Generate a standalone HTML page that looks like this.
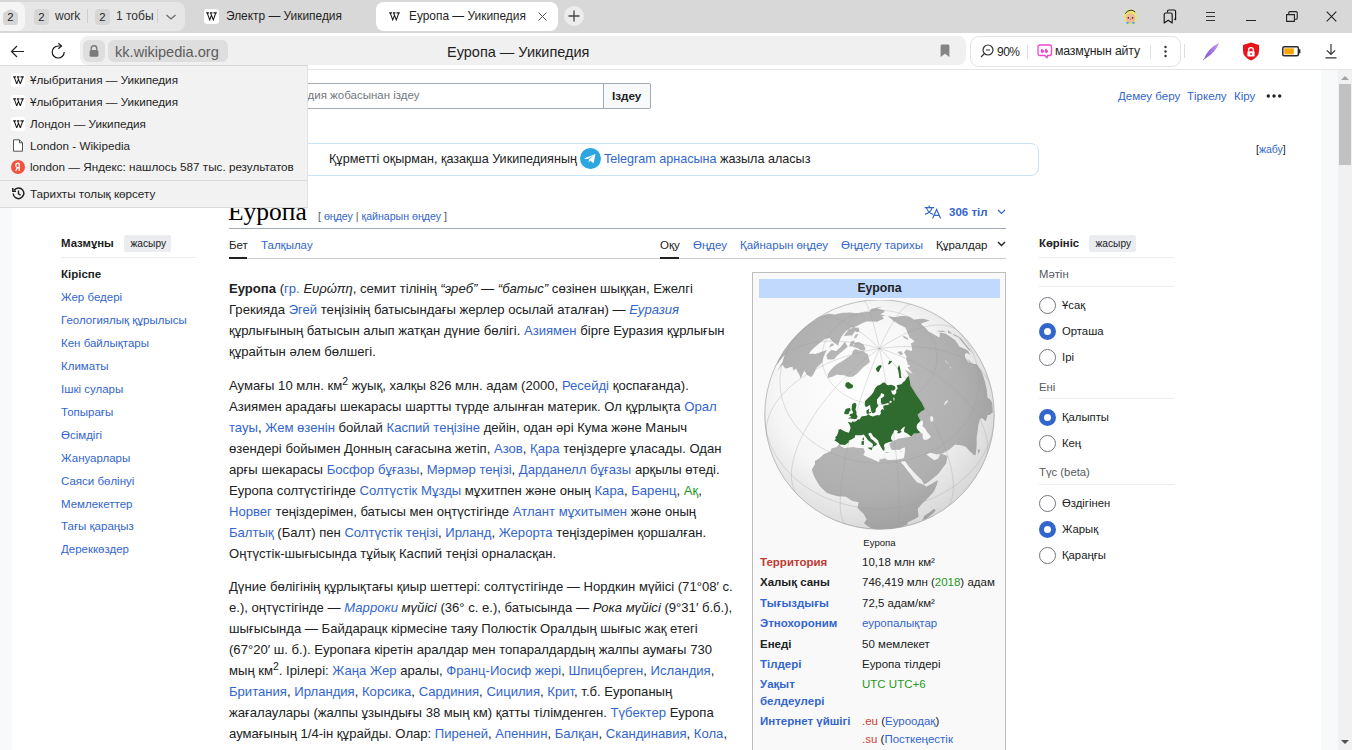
<!DOCTYPE html>
<html><head><meta charset="utf-8">
<style>
*{box-sizing:border-box;margin:0;padding:0}
html,body{width:1352px;height:750px;overflow:hidden;background:#fff;font-family:"Liberation Sans",sans-serif;color:#202122}
.abs{position:absolute}
#tabbar{position:absolute;left:0;top:0;width:1352px;height:33px;background:#d8d8d8}
#toolbar{position:absolute;left:0;top:33px;width:1352px;height:36px;background:#fff}
#page{position:absolute;left:0;top:70px;width:1352px;height:680px;background:#fff;overflow:hidden}
.chrome{line-height:15px}
a,.lk{color:#3366cc;text-decoration:none}
a.g,.g{color:#229922}
.t{position:absolute;white-space:nowrap;line-height:normal}
.badge{background:#d6d6d6;border-radius:4px;font-size:11.3px;color:#1f1f1f;text-align:center;line-height:16px}
.wlogo{background:#fff;border-radius:3px}
.ln{position:absolute;left:0;white-space:nowrap;line-height:21px}
sup{font-size:0.8em;line-height:0;vertical-align:super}
.radio{position:absolute;left:1039px;width:17px;height:17px;border-radius:50%;border:1px solid #72777d;background:#fff}
.radio.on{border:5px solid #3366cc}
.rl{left:1062px;font-size:11.3px;color:#202122}
.dd{left:30px;font-size:11.7px;color:#1f1f1f}
.ibl{position:absolute;left:0;white-space:nowrap;font-weight:bold}
.ibv{position:absolute;left:102px;white-space:nowrap;color:#202122}
.ibv.lk,.ibl.lk{color:#3366cc}
.ibv.g{color:#229922}
</style></head><body>
<div id="tabbar">
  <div class="abs" style="left:0;top:2px;width:185px;height:29px;background:#e6e6e6;border-radius:8px"></div>
  <div class="abs" style="left:0;top:2px;width:25px;height:29px;background:#f5f5f5;border-radius:0 8px 8px 0"></div>
  <svg class="abs" style="left:3px;top:8.5px" width="15" height="16.5" viewBox="0 0 15 16.5"><path d="M7.5 0.3 Q8.2 0.3 9 0.8 L13.6 3.2 Q15 4 15 5.6 V12.5 Q15 16.5 11 16.5 H4 Q0 16.5 0 12.5 V5.6 Q0 4 1.4 3.2 L6 0.8 Q6.8 0.3 7.5 0.3Z" fill="#d6d6d6"/></svg><div class="abs badge" style="left:3px;top:9px;width:15px;height:16px;background:none">2</div>
  <div class="abs badge" style="left:34px;top:9px;width:15px;height:16px">2</div>
  <div class="t chrome" style="left:55px;top:9px;font-size:12px;color:#333">work</div>
  <div class="abs" style="left:87px;top:9px;width:1px;height:14px;background:#cfcfcf"></div>
  <div class="abs badge" style="left:95px;top:9px;width:15px;height:16px">2</div>
  <div class="t chrome" style="left:116px;top:9px;font-size:12px;color:#333">1 тобы</div>
  <div class="abs" style="left:157px;top:9px;width:1px;height:14px;background:#cfcfcf"></div>
  <svg class="abs" style="left:165px;top:13px" width="12" height="8" viewBox="0 0 12 8"><path d="M1.5 2 L6 6 L10.5 2" fill="none" stroke="#666" stroke-width="1.2"/></svg>

  <div class="abs wlogo" style="left:204px;top:9px;width:15px;height:15px"><svg width="11" height="8.5" viewBox="0 0 13 10" style="position:absolute;left:2.0px;top:3.25px"><path d="M0.2 1 H3.6 M4.6 1 H7.6 M8.8 1 H12.8 M1.4 1 L4.4 9.3 L6.5 3.6 M5.4 1 L8.6 9.3 L11.6 1" fill="none" stroke="#1a1a1a" stroke-width="1.25"/></svg></div>
  <div class="t chrome" style="left:226px;top:9px;font-size:11.9px;color:#1f1f1f">Электр — Уикипедия</div>

  <div class="abs" style="left:376px;top:2px;width:182px;height:29px;background:#fff;border-radius:8px"></div>
  <div class="abs wlogo" style="left:387px;top:9px;width:15px;height:15px"><svg width="11" height="8.5" viewBox="0 0 13 10" style="position:absolute;left:2.0px;top:3.25px"><path d="M0.2 1 H3.6 M4.6 1 H7.6 M8.8 1 H12.8 M1.4 1 L4.4 9.3 L6.5 3.6 M5.4 1 L8.6 9.3 L11.6 1" fill="none" stroke="#1a1a1a" stroke-width="1.25"/></svg></div>
  <div class="t chrome" style="left:409px;top:9px;font-size:11.9px;color:#1f1f1f">Еуропа — Уикипедия</div>
  <svg class="abs" style="left:537px;top:11px" width="11" height="11" viewBox="0 0 11 11"><path d="M1.5 1.5 L9.5 9.5 M9.5 1.5 L1.5 9.5" stroke="#555" stroke-width="1"/></svg>
  <div class="abs" style="left:564px;top:6px;width:20px;height:20px;border-radius:50%;background:#ececec"></div>
  <svg class="abs" style="left:567px;top:9px" width="14" height="14" viewBox="0 0 14 14"><path d="M7 1.5 V12.5 M1.5 7 H12.5" stroke="#444" stroke-width="1.3"/></svg>

  <!-- right icons -->
  <svg class="abs" style="left:1123px;top:8.5px" width="15" height="16" viewBox="0 0 15 16">
    <ellipse cx="7.5" cy="8" rx="6.6" ry="7.4" fill="#e9e46a"/>
    <ellipse cx="7.5" cy="9" rx="4.6" ry="5" fill="#efb9a0"/>
    <path d="M3 5.5 Q5 4.2 7.5 4.5 Q10 4.2 12 5.5 Q11.5 3 7.5 3 Q3.5 3 3 5.5Z" fill="#e9e46a"/>
    <path d="M2.2 4.8 Q4 1.2 8 1.2 Q10.6 1.4 12.2 3" fill="none" stroke="#222" stroke-width="0.9"/>
    <circle cx="5.4" cy="8.8" r="0.85" fill="#3a3030"/><circle cx="9.6" cy="8.8" r="0.85" fill="#3a3030"/>
    <circle cx="7.5" cy="10.4" r="0.6" fill="#f0508a"/>
    <circle cx="4.3" cy="10" r="0.8" fill="#f4a0b0"/><circle cx="10.7" cy="10" r="0.8" fill="#f4a0b0"/>
    <path d="M3.6 12.6 L6.6 13.8 L3.6 15.2Z M11.4 12.6 L8.4 13.8 L11.4 15.2Z" fill="#3aa0f0"/>
  </svg>
  <svg class="abs" style="left:1163px;top:9px" width="14" height="15" viewBox="0 0 14 15"><path d="M4.5 3.2 V2.6 Q4.5 1 6 1 H11 Q12.6 1 12.6 2.6 V10.6 L11.2 10 M1.2 5.5 Q1.2 4 2.7 4 H7.6 Q9.2 4 9.2 5.5 V14 L5.2 11.2 L1.2 14Z" fill="none" stroke="#151515" stroke-width="1.15" stroke-linejoin="round"/></svg>
  <svg class="abs" style="left:1205px;top:11px" width="11" height="11" viewBox="0 0 11 11"><path d="M1 1.5 H10 M1 5.5 H10 M1 9.5 H10" stroke="#333" stroke-width="1.2"/></svg>
  <div class="abs" style="left:1246px;top:20px;width:10px;height:1.2px;background:#222"></div>
  <svg class="abs" style="left:1286px;top:11px" width="12" height="11" viewBox="0 0 12 11"><path d="M0.6 3.6 H8.4 V10.4 H0.6Z M2.8 3.6 V1.6 Q2.8 0.6 3.8 0.6 H10.2 Q11.2 0.6 11.2 1.6 V7.2 Q11.2 8.2 10.2 8.2 H8.4" fill="none" stroke="#222" stroke-width="1.1"/></svg>
  <svg class="abs" style="left:1326px;top:11px" width="11" height="11" viewBox="0 0 11 11"><path d="M0.7 0.7 L10.3 10.3 M10.3 0.7 L0.7 10.3" stroke="#222" stroke-width="1.1"/></svg>
</div>

<div id="toolbar">
  <svg class="abs" style="left:10px;top:12px" width="15" height="13" viewBox="0 0 15 13"><path d="M1.5 6.5 H14 M7 1 L1.5 6.5 L7 12" fill="none" stroke="#222" stroke-width="1.2"/></svg>
  <svg class="abs" style="left:51px;top:9px" width="15" height="17" viewBox="0 0 15 17"><path d="M13.2 10 A6 6 0 1 1 7.2 4 H10.4" fill="none" stroke="#1a1a1a" stroke-width="1.2"/><path d="M7.4 1.3 L10.5 4 L7.4 6.7" fill="none" stroke="#1a1a1a" stroke-width="1.2"/></svg>
  <div class="abs" style="left:80px;top:3px;width:886px;height:29px;background:#f0f0f0;border-radius:8px"></div>
  <div class="abs" style="left:83px;top:7px;width:22px;height:22px;background:#dedede;border-radius:6px"></div>
  <svg class="abs" style="left:89px;top:11px" width="10" height="14" viewBox="0 0 10 14"><path d="M2.2 6.5 V4.5 A2.8 2.8 0 0 1 7.8 4.5 V6.5" fill="none" stroke="#7a7a7a" stroke-width="1.4"/><rect x="0.6" y="6" width="8.8" height="6.8" rx="1.5" fill="#7a7a7a"/></svg>
  <div class="abs" style="left:108px;top:7px;width:120px;height:22px;background:#dedede;border-radius:6px"></div>
  <div class="t" style="left:115px;top:11px;font-size:14.6px;color:#5c5c5c">kk.wikipedia.org</div>
  <div class="t" style="left:447px;top:11px;font-size:14.5px;color:#1f1f1f">Еуропа — Уикипедия</div>
  <svg class="abs" style="left:939.5px;top:11px" width="10" height="14" viewBox="0 0 10 14"><path d="M0.6 2 Q0.6 0.6 2 0.6 H8 Q9.4 0.6 9.4 2 V13 L5 9.8 L0.6 13Z" fill="#858585"/></svg>

  <div class="abs" style="left:970px;top:3px;width:211px;height:31px;background:#fff;border:1px solid #e3e3e3;border-radius:9px"></div>
  <svg class="abs" style="left:980px;top:11px" width="14" height="14" viewBox="0 0 14 14"><circle cx="8" cy="6" r="5" fill="none" stroke="#333" stroke-width="1.2"/><path d="M4.5 9.5 L1 13 M6 6 H10" stroke="#333" stroke-width="1.2"/></svg>
  <div class="t chrome" style="left:997px;top:12px;font-size:12px;letter-spacing:-0.5px;color:#1f1f1f">90%</div>
  <div class="abs" style="left:1027px;top:12px;width:1px;height:14px;background:#e0e0e0"></div>
  <svg class="abs" style="left:1037px;top:11px" width="16" height="16" viewBox="0 0 16 16"><path d="M3 1 H12.5 Q14.5 1 14.5 3 V9.5 Q14.5 11.5 12.5 11.5 H10.5 L10 13.8 L8 11.5 H3 Q1 11.5 1 9.5 V3 Q1 1 3 1Z" fill="none" stroke="#ee46c8" stroke-width="1.3" stroke-linejoin="round"/><path d="M5.3 5 Q4.2 5.6 4.4 7.3 A1 1 0 1 0 5.6 6.3 M9.3 5 Q8.2 5.6 8.4 7.3 A1 1 0 1 0 9.6 6.3" stroke="#ee46c8" stroke-width="1.2" fill="#ee46c8"/></svg>
  <div class="t chrome" style="left:1055px;top:11px;font-size:12.3px;letter-spacing:-0.15px;color:#1f1f1f">мазмұнын айту</div>
  <div class="abs" style="left:1150px;top:12px;width:1px;height:14px;background:#e0e0e0"></div>
  <svg class="abs" style="left:1163px;top:12px" width="5" height="13" viewBox="0 0 5 13"><circle cx="2.5" cy="2" r="1.2" fill="#333"/><circle cx="2.5" cy="6.5" r="1.2" fill="#333"/><circle cx="2.5" cy="11" r="1.2" fill="#333"/></svg>
  <div class="abs" style="left:1184px;top:11px;width:1px;height:14px;background:#dedede"></div>
  <svg class="abs" style="left:1202px;top:9px" width="19" height="19" viewBox="0 0 19 19"><defs><linearGradient id="fg" x1="0" y1="1" x2="1" y2="0"><stop offset="0" stop-color="#7a4fd6"/><stop offset="1" stop-color="#c89cf2"/></linearGradient></defs><path d="M2 17 Q6 6 17 1 Q14 10 4 16Z" fill="url(#fg)"/><path d="M1 18 Q3 16 6 14" stroke="#9b7ae0" stroke-width="1"/></svg>
  <svg class="abs" style="left:1242px;top:9px" width="18" height="19" viewBox="0 0 18 19"><path d="M9 0.5 L17 3 V9 Q17 15 9 18.5 Q1 15 1 9 V3Z" fill="#e8141b"/><path d="M6.6 9.5 V8 A2.4 2.4 0 0 1 11.4 8 V9.5" fill="none" stroke="#fff" stroke-width="1.3"/><rect x="5.4" y="9.3" width="7.2" height="5.2" rx="0.8" fill="#fff"/><circle cx="9" cy="11.9" r="0.9" fill="#e8141b"/></svg>
  <svg class="abs" style="left:1282px;top:13px" width="19" height="11" viewBox="0 0 19 11"><rect x="0.8" y="0.8" width="15.6" height="9" rx="1.5" fill="none" stroke="#2a2a2a" stroke-width="1.5"/><rect x="2.3" y="2.3" width="9.5" height="6" fill="#f7a400"/><rect x="16.6" y="3.3" width="1.8" height="4" fill="#2a2a2a"/></svg>
  <svg class="abs" style="left:1325px;top:10px" width="12" height="16" viewBox="0 0 12 16"><path d="M6 1 V11.5 M1.8 7.3 L6 11.5 L10.2 7.3 M0.5 14.8 H11.5" fill="none" stroke="#333" stroke-width="1.2"/></svg>
</div>
<div id="page">
  <div class="abs" style="left:0;top:0;width:12px;height:680px;background:#f8f9fa"></div>
  <div class="abs" style="left:1321px;top:0;width:17px;height:680px;background:#f8f9fa"></div>
  <div class="abs" style="left:1338px;top:0;width:14px;height:680px;background:#f1f1f1"></div>
  <svg class="abs" style="left:1340px;top:5px" width="10" height="6" viewBox="0 0 10 6"><path d="M1 5 L5 1 L9 5Z" fill="#a3a3a3"/></svg>
  <div class="abs" style="left:1339px;top:14px;width:12px;height:81px;background:#c1c1c1"></div>
  <svg class="abs" style="left:1340px;top:669px" width="10" height="6" viewBox="0 0 10 6"><path d="M1 1 L5 5 L9 1Z" fill="#505050"/></svg>
</div>
<div class="abs" style="left:0;top:69px;width:1352px;height:1px;background:#e6e6e6"></div>

<!-- search -->
<div class="abs" style="left:180px;top:83px;width:424px;height:26px;border:1px solid #a2a9b1;border-radius:2px 0 0 2px;background:#fff"></div>
<div class="t" style="left:186px;top:89px;font-size:11.5px;color:#72777d;width:233.5px;text-align:right">Уикипедия жобасынан іздеу</div>
<div class="abs" style="left:603px;top:83px;width:48px;height:26px;border:1px solid #a2a9b1;border-radius:0 2px 2px 0;background:#f8f9fa"></div>
<div class="t" style="left:612px;top:89px;font-size:11.7px;font-weight:bold;color:#202122">Іздеу</div>

<div class="t lk" style="left:1118px;top:90px;font-size:11.5px">Демеу беру</div>
<div class="t lk" style="left:1187px;top:90px;font-size:11.5px">Тіркелу</div>
<div class="t lk" style="left:1234px;top:90px;font-size:11.5px">Кіру</div>
<svg class="abs" style="left:1266px;top:93px" width="16" height="6" viewBox="0 0 16 6"><circle cx="2.3" cy="3" r="1.7" fill="#202122"/><circle cx="8" cy="3" r="1.7" fill="#202122"/><circle cx="13.7" cy="3" r="1.7" fill="#202122"/></svg>

<!-- banner -->
<div class="abs" style="left:101px;top:143px;width:938px;height:33px;border:1px solid #c9e3f3;border-radius:8px;background:#fff"></div>
<div class="t" style="left:329px;top:152px;font-size:12.6px;color:#202122">Құрметті оқырман, қазақша Уикипедияның</div>
<svg class="abs" style="left:580px;top:148px" width="21" height="21" viewBox="0 0 21 21"><circle cx="10.5" cy="10.5" r="10.5" fill="#2ca5e0"/><path d="M4.5 10.2 L15.5 6 L13.6 15.2 L10.3 12.8 L8.6 14.4 L8.9 11.6 L13.7 7.3 L7.8 10.9 L4.8 10.9Z" fill="#fff"/></svg>
<div class="t lk" style="left:604px;top:152px;font-size:12.6px">Telegram арнасына</div>
<div class="t" style="left:720px;top:152px;font-size:12.6px;color:#202122">жазыла аласыз</div>
<div class="t" style="left:1256px;top:143px;font-size:10.5px;color:#202122">[<span class="lk">жабу</span>]</div>

<!-- heading -->
<div class="t" style="left:228px;top:197px;font-family:'Liberation Serif',serif;font-size:25.5px;color:#000">Еуропа</div>
<div class="t" style="left:318px;top:210px;font-size:10.6px;color:#54595d">[ <span class="lk">өңдеу</span> | <span class="lk">қайнарын өңдеу</span> ]</div>
<svg class="abs" style="left:924px;top:205px" width="18" height="14" viewBox="0 0 18 14"><path d="M5.2 0.6 V2.4 M0.6 2.6 H10.2 M2.4 2.6 Q4 7.6 9.2 9.4 M8.2 2.6 Q6.8 7.6 1 9.4 M8.6 13.4 L12.6 4.4 L16.6 13.4 M10 10.4 H15.2" fill="none" stroke="#3366cc" stroke-width="1.2"/></svg>
<div class="t" style="left:949px;top:206px;font-size:11.5px;font-weight:bold;color:#3366cc">306 тіл</div>
<svg class="abs" style="left:997px;top:209px" width="9" height="6" viewBox="0 0 9 6"><path d="M1 1 L4.5 4.5 L8 1" fill="none" stroke="#3366cc" stroke-width="1.2"/></svg>
<div class="abs" style="left:229px;top:228px;width:777px;height:1px;background:#a2a9b1"></div>

<!-- tabs -->
<div class="t" style="left:229px;top:239px;font-size:11.5px;color:#202122">Бет</div>
<div class="t lk" style="left:261px;top:239px;font-size:11.5px">Талқылау</div>
<div class="t" style="left:660px;top:239px;font-size:11.5px;color:#202122">Оқу</div>
<div class="t lk" style="left:693px;top:239px;font-size:11.5px">Өңдеу</div>
<div class="t lk" style="left:740px;top:239px;font-size:11.5px">Қайнарын өңдеу</div>
<div class="t lk" style="left:841px;top:239px;font-size:11.5px">Өңделу тарихы</div>
<div class="t" style="left:936px;top:239px;font-size:11.5px;color:#202122">Құралдар</div>
<svg class="abs" style="left:997px;top:241px" width="9" height="6" viewBox="0 0 9 6"><path d="M1 1 L4.5 4.5 L8 1" fill="none" stroke="#202122" stroke-width="1.4"/></svg>
<div class="abs" style="left:229px;top:258px;width:777px;height:1px;background:#c8ccd1"></div>
<div class="abs" style="left:229px;top:257px;width:18px;height:2px;background:#202122"></div>
<div class="abs" style="left:660px;top:257px;width:19px;height:2px;background:#202122"></div>

<!-- TOC -->
<div class="t" style="left:61px;top:237px;font-size:11.4px;font-weight:bold;color:#202122">Мазмұны</div>
<div class="abs" style="left:124px;top:235px;width:47px;height:17px;background:#eaecf0;border-radius:2px"></div>
<div class="t" style="left:130.5px;top:238px;font-size:10.2px;color:#202122">жасыру</div>
<div class="abs" style="left:61px;top:257px;width:135px;height:1px;background:#eaecf0"></div>
<div id="toc" class="abs" style="left:61px;top:263px;font-size:11.5px;line-height:22.95px">
  <div style="font-weight:bold;color:#202122">Кіріспе</div>
  <div class="lk">Жер бедері</div>
  <div class="lk">Геологиялық құрылысы</div>
  <div class="lk">Кен байлықтары</div>
  <div class="lk">Климаты</div>
  <div class="lk">Ішкі сулары</div>
  <div class="lk">Топырағы</div>
  <div class="lk">Өсімдігі</div>
  <div class="lk">Жануарлары</div>
  <div class="lk">Саяси бөлінуі</div>
  <div class="lk">Мемлекеттер</div>
  <div class="lk">Тағы қараңыз</div>
  <div class="lk">Дереккөздер</div>
</div>

<!-- right panel -->
<div class="t" style="left:1039px;top:237px;font-size:11.3px;font-weight:bold;color:#202122">Көрініс</div>
<div class="abs" style="left:1089px;top:235px;width:47px;height:17px;background:#eaecf0;border-radius:2px"></div>
<div class="t" style="left:1095.5px;top:238px;font-size:10.2px;color:#202122">жасыру</div>
<div class="abs" style="left:1039px;top:257px;width:135px;height:1px;background:#eaecf0"></div>
<div class="t" style="left:1039px;top:268px;font-size:11.3px;color:#54595d">Мәтін</div>
<div class="abs" style="left:1039px;top:286px;width:135px;height:1px;background:#eaecf0"></div>
<div class="radio" style="top:297px"></div><div class="t rl" style="top:299px">Ұсақ</div>
<div class="radio on" style="top:323px"></div><div class="t rl" style="top:325px">Орташа</div>
<div class="radio" style="top:349px"></div><div class="t rl" style="top:351px">Ірі</div>
<div class="t" style="left:1039px;top:381px;font-size:11.3px;color:#54595d">Ені</div>
<div class="abs" style="left:1039px;top:398px;width:135px;height:1px;background:#eaecf0"></div>
<div class="radio on" style="top:409px"></div><div class="t rl" style="top:411px">Қалыпты</div>
<div class="radio" style="top:435px"></div><div class="t rl" style="top:437px">Кең</div>
<div class="t" style="left:1039px;top:466px;font-size:11.3px;color:#54595d">Түс (beta)</div>
<div class="abs" style="left:1039px;top:484px;width:135px;height:1px;background:#eaecf0"></div>
<div class="radio" style="top:494.5px"></div><div class="t rl" style="top:497px">Өздігінен</div>
<div class="radio on" style="top:520.5px"></div><div class="t rl" style="top:523px">Жарық</div>
<div class="radio" style="top:546.5px"></div><div class="t rl" style="top:549px">Қараңғы</div>
<!-- article -->
<div id="art" class="abs" style="left:229px;top:0;font-size:13.1px;color:#202122">
<div class="ln" style="top:278px"><b>Еуропа</b> (<a>гр.</a> <i>Ευρώπη</i>, семит тілінің <i>“эреб”</i> — <i>“батыс”</i> сөзінен шыққан, Ежелгі</div>
<div class="ln" style="top:299px">Грекияда <a>Эгей</a> теңізінің батысындағы жерлер осылай аталған) — <a><i>Еуразия</i></a></div>
<div class="ln" style="top:320px">құрлығының батысын алып жатқан дүние бөлігі. <a>Азиямен</a> бірге Еуразия құрлығын</div>
<div class="ln" style="top:341px">құрайтын әлем бөлшегі.</div>

<div class="ln" style="top:375px">Аумағы 10 млн. км<sup>2</sup> жуық, халқы 826 млн. адам (2000, <a>Ресейді</a> қоспағанда).</div>
<div class="ln" style="top:396px">Азиямен арадағы шекарасы шартты түрде алынған материк. Ол құрлықта <a>Орал</a></div>
<div class="ln" style="top:417px"><a>тауы</a>, <a>Жем өзенін</a> бойлай <a>Каспий теңізіне</a> дейін, одан әрі Кума және Маныч</div>
<div class="ln" style="top:438px">өзендері бойымен Донның сағасына жетіп, <a>Азов</a>, <a>Қара</a> теңіздерге ұласады. Одан</div>
<div class="ln" style="top:459px">арғы шекарасы <a>Босфор бұғазы</a>, <a>Мәрмәр теңізі</a>, <a>Дарданелл бұғазы</a> арқылы өтеді.</div>
<div class="ln" style="top:480px">Еуропа солтүстігінде <a>Солтүстік Мұзды</a> мұхитпен және оның <a>Кара</a>, <a>Баренц</a>, <a class="g">Ақ</a>,</div>
<div class="ln" style="top:501px"><a>Норвег</a> теңіздерімен, батысы мен оңтүстігінде <a>Атлант мұхитымен</a> және оның</div>
<div class="ln" style="top:522px"><a>Балтық</a> (Балт) пен <a>Солтүстік теңізі</a>, <a>Ирланд</a>, <a>Жерорта</a> теңіздерімен қоршалған.</div>
<div class="ln" style="top:543px">Оңтүстік-шығысында тұйық Каспий теңізі орналасқан.</div>

<div class="ln" style="top:576px">Дүние бөлігінің құрлықтағы қиыр шеттері: солтүстігінде — Нордкин мүйісі (71°08′ с.</div>
<div class="ln" style="top:597px">е.), оңтүстігінде — <a><i>Марроки</i></a> <i>мүйісі</i> (36° с. е.), батысында — <i>Рока мүйісі</i> (9°31′ б.б.),</div>
<div class="ln" style="top:618px">шығысында — Байдарацк кірмесіне таяу Полюстік Оралдың шығыс жақ етегі</div>
<div class="ln" style="top:639px">(67°20′ ш. б.). Еуропаға кіретін аралдар мен топаралдардың жалпы аумағы 730</div>
<div class="ln" style="top:660px">мың км<sup>2</sup>. Ірілері: <a>Жаңа Жер</a> аралы, <a>Франц-Иосиф жері</a>, <a>Шпицберген</a>, <a>Исландия</a>,</div>
<div class="ln" style="top:681px"><a>Британия</a>, <a>Ирландия</a>, <a>Корсика</a>, <a>Сардиния</a>, <a>Сицилия</a>, <a>Крит</a>, т.б. Еуропаның</div>
<div class="ln" style="top:702px">жағалаулары (жалпы ұзындығы 38 мың км) қатты тілімденген. <a>Түбектер</a> Еуропа</div>
<div class="ln" style="top:723px">аумағының 1/4-ін құрайды. Олар: <a>Пиреней</a>, <a>Апеннин</a>, <a>Балқан</a>, <a>Скандинавия</a>, <a>Кола</a>,</div>
</div>

<!-- infobox -->
<div class="abs" style="left:752px;top:272px;width:254px;height:500px;background:#f9f9f9;border:1px solid #bdbdbd"></div>
<div class="abs" style="left:759px;top:279px;width:241px;height:19px;background:#c0d9fc"></div>
<div class="t" style="left:759px;top:280.5px;width:241px;text-align:center;font-size:12.3px;font-weight:bold;color:#202122">Еуропа</div>
<div class="abs" id="globe" style="left:764px;top:300px;width:231px;height:231px"><svg width="231" height="231" viewBox="0 0 231 231"><defs>
<radialGradient id="gsea" cx="0.42" cy="0.4" r="0.62"><stop offset="0" stop-color="#ffffff"/><stop offset="0.6" stop-color="#f6f6f6"/><stop offset="1" stop-color="#d9d9d9"/></radialGradient>
<radialGradient id="gland" cx="0.42" cy="0.4" r="0.62"><stop offset="0" stop-color="#bcbcbc"/><stop offset="0.7" stop-color="#b0b0b0"/><stop offset="1" stop-color="#a0a0a0"/></radialGradient>
<clipPath id="gclip"><circle cx="115.5" cy="114.5" r="115.0"/></clipPath></defs>
<circle cx="115.5" cy="114.5" r="115.0" fill="url(#gsea)"/>
<g clip-path="url(#gclip)">
<path d="M147.1 136.4 L144.4 137.0 L141.8 137.6 L139.1 138.0 L136.9 138.3 L134.7 138.6 L131.9 139.9 L129.0 141.1 L125.2 143.8 L126.2 146.6 L127.2 149.4 L129.1 150.0 L132.3 149.7 L135.6 149.9 L138.6 148.0 L140.9 147.5 L141.0 150.0 L140.5 154.9 L139.8 158.2 L136.5 159.1 L137.1 161.2 L141.2 161.3 L143.0 164.0 L144.9 166.8 L147.5 169.6 L150.2 172.4 L152.1 174.4 L154.0 176.3 L155.9 178.2 L157.8 180.0 L158.9 182.2 L159.9 184.4 L162.9 183.1 L165.8 180.9 L168.7 178.6 L171.5 176.3 L174.2 173.9 L176.4 171.1 L178.4 168.3 L182.1 163.4 L182.9 159.8 L183.5 156.1 L180.0 154.8 L176.5 153.3 L174.2 158.7 L170.2 160.2 L167.0 158.1 L164.7 156.3 L162.5 154.4 L166.3 152.7 L169.6 153.6 L172.9 154.5 L175.4 154.1 L177.9 153.7 L180.3 152.4 L182.8 151.1 L185.1 149.8 L187.2 148.1 L189.2 146.3 L191.1 144.6 L194.0 144.9 L196.9 145.2 L199.5 146.1 L202.1 146.9 L203.8 148.9 L205.4 150.9 L206.9 152.2 L208.3 153.5 L209.6 154.7 L211.5 155.3 L212.0 152.0 L212.4 148.7 L212.7 145.3 L212.7 141.4 L212.6 137.5 L213.3 133.4 L213.9 129.3 L214.3 125.2 L215.1 122.4 L215.7 119.7 L217.6 118.0 L219.1 119.1 L220.5 120.2 L221.8 121.3 L222.8 118.2 L223.6 115.1 L225.6 115.0 L226.8 114.0 L227.8 113.0 L228.8 112.8 L228.6 107.8 L228.2 103.0 L227.5 101.8 L226.8 100.6 L226.0 99.5 L224.7 98.4 L223.4 97.3 L223.2 94.1 L222.9 90.9 L222.3 87.4 L221.5 83.9 L220.6 80.6 L219.6 77.3 L218.5 74.1 L217.3 70.9 L215.7 68.6 L214.1 66.3 L212.4 64.1 L211.0 64.1 L209.4 64.1 L207.8 63.2 L206.1 62.4 L204.7 58.8 L204.7 61.0 L204.6 63.2 L203.0 60.2 L201.2 57.4 L201.0 55.7 L200.8 54.0 L203.0 53.1 L204.7 54.1 L206.4 55.1 L205.1 52.8 L203.8 50.6 L201.8 49.5 L199.7 48.6 L197.6 47.6 L195.4 46.8 L194.1 44.5 L192.6 42.3 L191.1 40.2 L187.8 37.7 L184.5 35.5 L181.2 33.4 L178.4 33.0 L175.5 32.6 L175.7 34.3 L175.7 36.0 L175.3 37.6 L173.1 36.2 L171.0 34.9 L168.8 33.7 L166.6 32.6 L164.5 31.6 L163.6 30.6 L162.7 29.6 L161.8 28.6 L160.9 27.6 L159.9 26.6 L158.9 25.7 L157.8 24.8 L156.8 23.9 L158.7 23.1 L160.5 22.3 L162.3 21.7 L164.1 21.1 L165.8 20.6 L162.3 19.6 L158.9 18.7 L156.7 18.8 L154.5 19.0 L152.3 19.3 L150.1 19.8 L148.7 18.9 L147.2 18.1 L145.8 17.3 L144.2 16.6 L142.2 16.3 L140.2 16.1 L138.2 16.0 L136.2 16.0 L134.1 16.6 L132.1 17.3 L130.7 17.1 L129.3 16.9 L127.8 16.7 L126.4 16.6 L125.0 16.6 L123.6 16.5 L124.8 17.2 L125.9 18.0 L126.9 18.7 L127.9 19.5 L128.8 20.4 L129.6 21.2 L130.6 21.7 L131.6 22.3 L132.5 22.8 L133.4 23.4 L134.3 24.0 L135.2 24.6 L136.2 25.0 L137.2 25.5 L138.2 26.0 L139.2 26.5 L140.2 27.0 L141.1 27.6 L141.6 28.4 L142.1 29.3 L142.5 30.2 L142.9 31.0 L143.2 31.9 L143.5 32.7 L143.9 33.5 L144.3 34.3 L144.6 35.1 L144.9 35.9 L145.2 36.6 L145.4 37.4 L146.4 38.0 L147.3 38.7 L148.1 39.4 L149.0 40.1 L149.9 40.9 L150.7 41.6 L148.7 42.6 L146.7 43.4 L147.0 44.1 L147.2 44.8 L147.4 45.5 L147.6 46.3 L147.7 47.0 L147.9 47.7 L148.0 48.4 L148.1 49.1 L148.1 49.9 L147.7 50.5 L147.2 51.1 L142.3 49.6 L141.9 50.1 L141.4 50.7 L140.9 51.2 L140.4 51.7 L139.9 52.2 L140.3 52.8 L140.8 53.5 L141.2 54.2 L141.6 54.9 L142.0 55.6 L142.4 56.4 L142.4 57.2 L142.3 57.9 L142.3 58.7 L142.2 59.5 L142.6 60.5 L143.0 61.5 L143.3 62.5 L143.6 63.6 L143.8 64.6 L146.4 66.1 L145.4 66.6 L144.4 67.0 L143.4 67.5 L146.2 70.7 L148.9 74.1 L146.2 72.6 L143.5 71.1 L140.9 69.5 L142.8 72.5 L144.5 75.6 L145.4 78.7 L145.9 80.9 L146.2 83.2 L146.4 85.4 L148.2 88.3 L150.0 91.1 L151.7 94.0 L153.6 96.7 L155.6 99.4 L157.5 102.2 L159.3 105.7 L161.0 109.3 L159.1 110.6 L157.0 111.8 L155.3 113.3 L153.6 114.7 L155.1 117.9 L156.5 121.0 L158.6 120.4 L159.2 124.0 L158.1 125.7 L161.1 128.5 L163.5 132.6 L166.2 135.4 L166.7 137.2 L163.0 139.8 L159.7 139.7 L158.7 137.5 L158.6 134.0 L156.4 132.3 L153.8 133.4 L150.0 133.4Z M74.8 144.6 L77.5 146.4 L80.3 148.0 L83.0 147.8 L85.8 147.5 L88.6 147.1 L91.3 147.5 L94.1 147.9 L96.8 148.1 L99.6 148.3 L100.9 151.9 L99.2 154.9 L101.8 156.2 L104.4 157.4 L107.0 158.6 L109.7 159.8 L112.4 161.1 L115.2 162.2 L115.5 159.4 L118.0 158.9 L120.6 158.2 L124.0 159.9 L126.8 159.9 L129.6 159.8 L132.4 159.7 L136.5 159.1 L137.1 161.2 L137.3 163.0 L139.8 165.2 L141.7 167.9 L143.6 170.6 L145.4 172.8 L147.2 174.9 L148.7 177.0 L150.2 179.1 L152.9 182.3 L156.3 183.6 L159.7 184.8 L162.4 186.8 L165.3 185.1 L168.2 183.5 L171.0 181.7 L173.8 179.9 L173.1 184.3 L171.9 187.0 L170.7 189.7 L169.3 192.2 L166.7 195.1 L164.1 197.8 L161.4 200.5 L158.6 203.0 L156.2 205.9 L153.7 208.7 L153.9 210.4 L154.1 212.0 L154.2 213.6 L154.3 214.7 L154.4 215.8 L154.4 216.8 L150.8 218.9 L147.1 220.8 L143.5 222.6 L143.5 223.5 L143.6 224.3 L141.5 225.2 L139.4 226.1 L137.4 226.8 L134.9 227.5 L132.5 228.1 L129.9 228.5 L127.2 228.9 L124.6 229.1 L121.6 229.3 L118.5 229.5 L115.5 229.5 L112.8 229.5 L111.6 229.3 L110.4 229.1 L109.1 228.8 L107.9 228.4 L106.5 227.9 L105.4 227.3 L104.3 226.6 L103.2 225.9 L102.1 225.0 L101.0 224.0 L99.8 223.0 L100.8 221.9 L101.7 220.7 L102.7 219.4 L101.9 218.1 L101.1 216.7 L100.4 215.2 L99.6 213.7 L97.6 211.9 L95.5 210.1 L93.6 208.1 L93.9 206.2 L94.2 204.3 L94.6 202.3 L91.2 201.5 L87.8 200.7 L84.9 198.8 L82.1 196.8 L78.9 196.6 L75.7 196.4 L72.6 196.0 L69.2 195.0 L65.8 193.9 L62.6 192.8 L59.2 189.5 L55.9 186.2 L53.2 182.0 L50.8 177.7 L49.2 173.9 L47.8 170.1 L48.8 168.0 L49.9 166.0 L51.0 163.9 L50.9 161.1 L53.1 159.7 L55.2 158.2 L57.6 156.2 L59.9 154.1 L63.1 152.8 L66.3 151.5 L67.7 148.2 L72.5 147.3Z M91.6 49.0 L92.6 49.4 L93.6 49.8 L94.6 50.2 L95.6 50.5 L96.6 50.8 L97.6 51.1 L98.7 51.3 L99.7 51.5 L100.0 51.7 L100.4 52.0 L100.7 52.3 L101.0 52.5 L101.3 52.8 L101.7 53.0 L102.0 53.2 L102.4 53.4 L102.8 53.6 L103.1 53.8 L103.5 54.0 L103.9 54.1 L104.2 54.3 L104.2 54.7 L104.2 55.0 L104.2 55.4 L104.2 55.8 L104.3 56.1 L104.3 56.5 L104.4 56.9 L104.5 57.3 L104.6 57.7 L104.7 58.1 L104.9 58.4 L105.0 58.8 L105.2 59.2 L105.3 59.7 L105.4 60.3 L105.6 60.8 L105.8 61.3 L106.0 61.8 L104.5 63.2 L102.9 64.5 L101.3 65.7 L99.6 66.9 L97.3 69.3 L95.0 71.7 L92.7 74.1 L89.2 76.5 L87.2 76.8 L85.2 77.1 L84.0 76.7 L82.7 76.3 L81.5 75.8 L80.4 75.3 L78.6 75.2 L76.9 75.1 L75.1 74.9 L73.4 74.6 L70.6 75.8 L67.8 77.0 L63.8 78.0 L63.8 76.0 L63.8 73.9 L65.8 71.2 L67.8 68.7 L70.1 66.5 L72.5 64.5 L75.1 62.9 L77.7 61.4 L80.3 59.7 L82.9 58.1 L85.4 56.2 L88.1 54.5 L88.2 53.8 L88.3 53.1 L88.4 52.4 L88.5 51.8 L88.7 51.1 L89.6 50.4 L90.6 49.6Z M12.9 71.8 L14.6 69.4 L16.4 67.1 L18.4 64.8 L19.4 66.1 L20.5 67.4 L21.8 68.6 L23.9 67.9 L26.0 67.3 L28.3 66.7 L28.9 68.7 L29.6 70.6 L32.1 68.5 L32.7 69.9 L33.4 71.3 L34.1 72.7 L35.3 74.4 L36.0 76.4 L36.8 78.4 L37.9 75.8 L39.1 73.2 L40.4 70.6 L41.1 71.9 L41.9 73.2 L42.7 74.5 L44.1 75.4 L45.5 76.2 L47.0 77.0 L49.1 75.0 L50.3 72.5 L51.5 70.0 L52.8 67.6 L55.5 64.9 L58.3 62.3 L58.6 60.9 L58.9 59.5 L59.3 58.2 L59.7 56.8 L60.3 55.4 L60.9 54.0 L61.5 52.6 L62.2 51.3 L62.9 49.9 L58.4 51.6 L55.0 52.7 L51.6 53.9 L49.3 53.8 L47.0 53.8 L44.8 53.7 L46.3 51.8 L47.8 50.0 L49.8 48.1 L51.9 46.2 L54.0 44.4 L55.7 42.9 L57.4 41.6 L59.2 40.2 L61.0 39.0 L65.6 37.9 L66.3 39.0 L67.2 40.1 L68.1 41.1 L69.7 42.4 L71.4 43.7 L72.8 44.8 L74.3 46.0 L74.4 45.0 L74.6 44.0 L74.8 43.1 L75.1 42.2 L75.4 41.2 L75.7 40.3 L76.1 39.4 L76.5 38.4 L77.0 37.5 L77.6 36.6 L78.2 35.7 L78.8 34.8 L79.5 34.0 L80.2 33.1 L80.9 32.3 L81.7 31.5 L82.5 30.7 L83.7 30.0 L84.8 29.4 L86.0 28.9 L87.2 28.4 L88.4 27.9 L89.6 27.4 L90.6 26.9 L91.6 26.4 L92.7 25.9 L93.7 25.4 L94.8 25.0 L95.8 24.6 L96.7 24.1 L97.6 23.6 L98.5 23.2 L99.5 22.7 L100.4 22.3 L101.4 21.9 L102.4 21.5 L103.5 21.4 L104.6 21.4 L105.7 21.4 L106.7 21.4 L107.8 21.4 L108.9 21.4 L109.9 21.5 L110.9 21.6 L111.9 21.7 L112.9 21.9 L114.0 21.3 L115.1 20.7 L116.2 20.2 L117.4 19.7 L118.6 19.2 L119.9 18.8 L119.0 17.4 L117.9 16.0 L119.3 15.9 L120.7 15.8 L122.1 15.8 L120.7 15.4 L119.3 15.0 L117.9 14.7 L116.4 14.4 L118.2 13.3 L120.2 12.2 L120.5 10.5 L118.8 9.9 L117.1 9.5 L115.2 9.0 L113.4 8.7 L115.5 7.7 L117.8 6.8 L115.9 7.1 L114.0 7.4 L112.2 7.8 L110.4 8.2 L108.7 8.6 L107.0 9.1 L106.4 10.4 L105.8 11.8 L103.8 11.9 L101.8 12.1 L100.3 12.2 L98.7 12.4 L97.2 12.6 L95.7 12.9 L93.2 12.9 L90.7 13.0 L88.1 12.7 L85.5 12.6 L82.7 12.7 L80.0 12.8 L77.1 13.0 L73.9 13.7 L70.7 14.6 L69.1 14.2 L67.6 13.9 L66.1 13.8 L64.9 13.7 L63.7 13.7 L61.3 14.6 L59.0 15.5 L54.6 17.7 L52.0 19.3 L49.4 21.0 L46.8 22.6 L44.2 24.5 L41.7 26.4 L39.2 28.5 L36.8 30.7 L34.4 33.0 L31.8 35.6 L29.4 38.3 L26.9 41.1 L24.8 43.8 L22.7 46.5 L20.8 49.3 L18.9 52.2 L17.0 55.1 L15.3 58.0 L14.6 59.4 L14.0 60.8 L13.5 62.3 L13.1 63.7 L12.8 65.1 L14.3 62.9 L15.9 60.6 L17.5 58.5 L19.2 56.4 L21.0 54.3 L20.3 56.2 L19.8 58.0 L19.3 59.9 L18.9 61.8 L16.7 65.0 L14.7 68.4Z M70.1 59.2 L66.8 59.4 L63.5 59.5 L63.2 58.4 L62.9 57.4 L62.6 56.3 L62.4 55.2 L63.6 53.8 L64.8 52.4 L66.0 51.1 L67.3 49.9 L69.9 50.4 L72.5 50.9 L73.5 49.8 L74.6 48.8 L75.7 47.8 L76.8 46.9 L77.4 46.0 L78.1 45.1 L78.9 44.2 L79.6 43.3 L80.4 42.5 L81.2 41.7 L81.5 42.6 L81.9 43.4 L82.3 44.3 L82.7 45.1 L83.2 45.8 L83.7 46.6 L82.8 47.4 L81.9 48.2 L81.1 49.1 L79.7 50.1 L78.4 51.2 L77.1 52.3 L75.7 53.5 L74.3 54.7 L72.9 56.1 L71.5 57.6Z M90.3 42.8 L89.9 43.4 L89.6 44.0 L89.3 44.6 L89.0 45.3 L88.7 45.9 L88.5 46.5 L90.2 47.2 L91.9 47.7 L93.6 48.2 L94.3 48.7 L94.9 49.1 L95.5 49.5 L96.2 49.9 L96.9 50.3 L97.6 50.6 L99.1 50.8 L100.6 50.8 L100.7 50.4 L100.8 50.1 L100.9 49.7 L101.0 49.4 L101.1 49.0 L101.2 48.7 L101.4 48.4 L101.5 48.0 L101.3 47.7 L101.0 47.4 L100.8 47.1 L100.6 46.7 L100.4 46.4 L100.2 46.0 L100.0 45.7 L99.8 45.3 L99.7 44.9 L99.5 44.5 L97.9 43.7 L96.3 42.8 L94.7 41.9 L93.2 42.2 L91.8 42.5Z M85.2 46.6 L85.4 45.9 L85.6 45.3 L85.7 44.6 L86.0 44.0 L86.2 43.4 L86.4 42.7 L86.7 42.1 L87.0 41.5 L88.8 41.0 L90.5 40.5 L90.4 41.1 L90.3 41.7 L90.2 42.3 L90.1 42.9 L90.1 43.5 L90.1 44.1 L90.1 44.7 L89.4 45.3 L88.8 45.9 L88.1 46.5Z M95.1 27.9 L94.4 28.4 L93.8 29.0 L93.1 29.5 L92.5 30.1 L91.9 30.7 L91.3 31.3 L90.8 31.9 L90.2 32.5 L89.7 33.1 L89.3 33.7 L88.8 34.3 L88.4 35.0 L88.0 35.6 L85.3 35.6 L82.6 35.7 L79.8 36.0 L80.3 35.3 L80.8 34.5 L81.3 33.7 L81.9 33.0 L82.5 32.3 L83.1 31.5 L83.7 30.8 L84.4 30.1 L85.1 29.4 L85.8 28.8 L86.5 28.1 L87.3 27.5 L89.3 27.4 L91.3 27.5 L93.2 27.7Z M67.2 43.5 L66.4 44.8 L65.8 46.1 L65.1 47.4 L69.6 45.6 L69.6 44.7 L69.7 43.7Z M94.6 27.5 L94.8 28.8 L95.1 30.1 L95.5 31.5 L94.5 31.7 L93.4 32.0 L92.4 32.3 L91.4 30.8 L90.4 29.3 L91.5 28.8 L92.5 28.3 L93.5 27.9Z M94.5 33.5 L94.1 34.2 L93.7 34.8 L93.4 35.5 L93.2 36.1 L92.9 36.8 L92.7 37.4 L91.7 37.8 L90.7 38.2 L89.7 38.6 L90.0 37.9 L90.3 37.3 L90.6 36.6 L90.9 35.9 L91.3 35.3 L91.7 34.6 L92.6 34.2 L93.5 33.9Z M183.2 32.4 L180.8 31.4 L178.4 30.6 L176.4 30.7 L174.3 30.8 L172.2 31.0 L174.5 31.4 L176.9 31.8 L179.1 31.9 L181.2 32.1Z M157.9 220.4 L160.4 219.4 L162.8 218.4 L164.4 217.3 L165.9 216.1 L167.4 214.8 L168.9 213.4 L170.3 211.9 L171.7 210.3 L170.9 209.6 L170.0 208.8 L166.8 211.4 L163.5 213.8 L160.2 216.1 L159.8 217.1 L159.4 218.0 L158.9 218.9 L158.4 219.7Z M214.5 154.4 L216.2 149.7 L213.6 149.7 L214.1 152.1Z M208.1 52.9 L206.1 50.1 L204.1 47.3 L201.9 44.6 L200.2 42.3 L198.4 40.0 L196.6 37.9 L194.6 36.6 L192.6 35.5 L190.6 34.4 L188.6 33.8 L186.4 33.4 L184.2 33.0 L184.1 31.4 L183.8 29.9 L186.0 31.7 L188.0 33.6 L190.1 35.5 L192.3 36.4 L194.4 37.3 L196.2 39.5 L198.0 41.8 L200.1 44.2 L202.1 46.7 L204.0 49.3 L206.1 51.1Z M136.4 55.3 L135.8 54.6 L135.2 53.8 L134.6 53.2 L133.9 52.5 L133.2 51.9 L134.6 51.8 L136.0 51.6 L137.4 51.3 L137.8 52.0 L138.2 52.6 L138.5 53.3 L138.9 54.1 L138.3 54.4 L137.6 54.7 L137.0 55.0Z M144.2 40.1 L143.2 39.6 L142.1 39.0 L141.0 38.6 L139.9 38.1 L139.7 37.5 L139.5 37.0 L139.2 36.4 L139.0 35.8 L139.9 36.1 L140.9 36.5 L141.9 36.9 L142.8 37.4 L143.8 37.9 L144.0 38.6 L144.1 39.4Z M135.6 152.6 L138.9 150.3 L136.6 151.3Z" fill="url(#gland)" fill-rule="nonzero"/>
<path d="M148.1 4.2 L147.3 4.1 L146.5 4.1 L145.6 4.3 L144.7 4.6 L143.8 5.0 L142.8 5.6 L141.8 6.2 L140.8 7.1 L139.7 8.0 L138.6 9.1 L137.5 10.3 L136.3 11.7 L135.2 13.1 L134.0 14.7 L132.7 16.4 L131.5 18.2 L130.2 20.2 L129.0 22.2 L127.7 24.4 L126.3 26.7 L125.0 29.1 L123.7 31.6 L122.3 34.2 L121.0 36.9 L119.6 39.6 L118.2 42.5 L116.9 45.5 L115.5 48.5 M99.3 0.7 L99.8 0.8 L100.2 1.0 L100.7 1.4 L101.1 1.9 L101.6 2.6 L102.1 3.4 L102.7 4.3 L103.2 5.4 L103.8 6.6 L104.3 7.9 L104.9 9.4 L105.5 11.0 L106.1 12.7 L106.7 14.5 L107.4 16.5 L108.0 18.6 L108.7 20.8 L109.3 23.1 L110.0 25.5 L110.7 28.1 L111.3 30.7 L112.0 33.4 L112.7 36.3 L113.4 39.2 L114.1 42.2 L114.8 45.3 L115.5 48.5 M51.5 19.0 L52.8 18.3 L54.2 17.8 L55.7 17.3 L57.2 17.0 L58.9 16.8 L60.6 16.7 L62.3 16.8 L64.2 16.9 L66.0 17.2 L68.0 17.6 L70.0 18.1 L72.1 18.7 L74.2 19.5 L76.3 20.3 L78.5 21.3 L80.8 22.4 L83.1 23.6 L85.4 24.9 L87.8 26.3 L90.2 27.8 L92.7 29.5 L95.1 31.2 L97.6 33.0 L100.1 35.0 L102.7 37.0 L105.2 39.1 L107.8 41.4 L110.3 43.7 L112.9 46.1 L115.5 48.5 M10.6 67.3 L11.6 65.3 L12.7 63.5 L14.0 61.7 L15.3 59.9 L16.8 58.2 L18.4 56.6 L20.1 55.1 L21.9 53.6 L23.9 52.2 L25.9 50.9 L28.1 49.7 L30.3 48.5 L32.7 47.4 L35.2 46.4 L37.8 45.5 L40.4 44.7 L43.2 43.9 L46.0 43.3 L49.0 42.7 L52.0 42.2 L55.1 41.8 L58.2 41.5 L61.5 41.3 L64.8 41.1 L68.1 41.1 L71.5 41.1 L75.0 41.3 L78.5 41.5 L82.1 41.8 L85.7 42.2 L89.4 42.7 L93.0 43.3 L96.7 43.9 L100.5 44.7 L104.2 45.5 L108.0 46.5 L111.7 47.5 L115.5 48.5 M2.9 137.7 L2.5 135.4 L2.3 133.2 L2.2 130.9 L2.3 128.5 L2.5 126.2 L2.9 123.9 L3.3 121.5 L4.0 119.2 L4.7 116.8 L5.6 114.4 L6.6 112.0 L7.8 109.7 L9.1 107.3 L10.5 105.0 L12.0 102.6 L13.7 100.3 L15.5 98.0 L17.4 95.7 L19.5 93.4 L21.6 91.2 L23.9 89.0 L26.3 86.8 L28.7 84.6 L31.3 82.5 L34.0 80.4 L36.8 78.4 L39.7 76.4 L42.7 74.5 L45.8 72.6 L48.9 70.8 L52.2 69.0 L55.5 67.2 L58.9 65.6 L62.3 63.9 L65.9 62.4 L69.4 60.9 L73.1 59.5 L76.8 58.1 L80.5 56.8 L84.3 55.6 L88.1 54.5 L92.0 53.4 L95.8 52.4 L99.7 51.5 L103.7 50.6 L107.6 49.8 L111.5 49.1 L115.5 48.5 M35.0 196.6 L33.8 195.4 L32.7 194.0 L31.7 192.5 L30.8 190.9 L30.0 189.2 L29.3 187.4 L28.7 185.6 L28.3 183.6 L27.9 181.6 L27.6 179.5 L27.5 177.3 L27.4 175.1 L27.5 172.7 L27.6 170.3 L27.9 167.8 L28.3 165.3 L28.7 162.7 L29.3 160.0 L30.0 157.3 L30.8 154.5 L31.7 151.7 L32.7 148.8 L33.8 145.9 L35.0 143.0 L36.3 140.0 L37.7 137.0 L39.2 134.0 L40.8 130.9 L42.5 127.8 L44.2 124.7 L46.1 121.6 L48.0 118.5 L50.0 115.4 L52.1 112.2 L54.3 109.1 L56.6 106.0 L58.9 102.9 L61.3 99.8 L63.7 96.7 L66.2 93.7 L68.8 90.6 L71.5 87.7 L74.1 84.7 L76.9 81.8 L79.7 78.9 L82.5 76.0 L85.4 73.2 L88.3 70.5 L91.2 67.8 L94.2 65.1 L97.2 62.6 L100.2 60.1 L103.2 57.6 L106.3 55.2 L109.4 52.9 L112.4 50.7 L115.5 48.5 M82.1 224.5 L81.4 224.1 L80.8 223.6 L80.1 223.0 L79.6 222.2 L79.0 221.3 L78.5 220.2 L78.1 219.1 L77.7 217.8 L77.3 216.3 L77.0 214.8 L76.8 213.1 L76.6 211.3 L76.4 209.4 L76.3 207.4 L76.2 205.3 L76.2 203.0 L76.2 200.7 L76.3 198.2 L76.4 195.6 L76.6 193.0 L76.8 190.2 L77.0 187.4 L77.3 184.4 L77.7 181.4 L78.1 178.3 L78.5 175.1 L79.0 171.9 L79.6 168.5 L80.1 165.1 L80.8 161.7 L81.4 158.2 L82.1 154.6 L82.9 151.0 L83.7 147.3 L84.5 143.6 L85.4 139.9 L86.3 136.1 L87.2 132.4 L88.2 128.5 L89.2 124.7 L90.2 120.9 L91.3 117.0 L92.4 113.2 L93.5 109.3 L94.7 105.5 L95.8 101.6 L97.0 97.8 L98.3 94.0 L99.5 90.2 L100.8 86.5 L102.0 82.8 L103.3 79.1 L104.7 75.5 L106.0 71.9 L107.3 68.4 L108.7 64.9 L110.0 61.5 L111.4 58.2 L112.8 54.9 L114.1 51.7 L115.5 48.5 M132.1 228.3 L132.4 228.1 L132.8 227.8 L133.1 227.4 L133.4 226.8 L133.7 226.1 L134.0 225.2 L134.3 224.2 L134.5 223.1 L134.7 221.9 L134.9 220.5 L135.0 219.0 L135.2 217.3 L135.3 215.5 L135.4 213.7 L135.4 211.6 L135.5 209.5 L135.5 207.3 L135.5 204.9 L135.4 202.4 L135.4 199.9 L135.3 197.2 L135.2 194.4 L135.0 191.5 L134.9 188.6 L134.7 185.5 L134.5 182.3 L134.3 179.1 L134.0 175.8 L133.7 172.4 L133.4 169.0 L133.1 165.4 L132.8 161.9 L132.4 158.2 L132.1 154.5 L131.7 150.8 L131.2 147.0 L130.8 143.2 L130.3 139.3 L129.9 135.4 L129.4 131.5 L128.9 127.6 L128.3 123.6 L127.8 119.6 L127.2 115.7 L126.7 111.7 L126.1 107.7 L125.5 103.8 L124.9 99.8 L124.3 95.9 L123.6 92.0 L123.0 88.1 L122.3 84.2 L121.7 80.4 L121.0 76.7 L120.3 72.9 L119.7 69.3 L119.0 65.7 L118.3 62.1 L117.6 58.6 L116.9 55.2 L116.2 51.8 L115.5 48.5 M180.8 209.2 L181.9 208.3 L183.0 207.3 L184.0 206.1 L185.0 204.9 L185.8 203.5 L186.6 202.0 L187.2 200.5 L187.8 198.8 L188.3 197.0 L188.7 195.1 L189.0 193.2 L189.2 191.1 L189.4 188.9 L189.4 186.7 L189.4 184.3 L189.2 181.9 L189.0 179.4 L188.7 176.8 L188.3 174.1 L187.8 171.4 L187.2 168.6 L186.6 165.7 L185.8 162.7 L185.0 159.8 L184.0 156.7 L183.0 153.6 L181.9 150.4 L180.8 147.2 L179.5 144.0 L178.2 140.7 L176.8 137.4 L175.3 134.1 L173.8 130.8 L172.1 127.4 L170.4 124.0 L168.7 120.6 L166.8 117.2 L165.0 113.8 L163.0 110.4 L161.0 106.9 L158.9 103.6 L156.8 100.2 L154.7 96.8 L152.5 93.5 L150.2 90.1 L147.9 86.8 L145.6 83.6 L143.2 80.4 L140.8 77.2 L138.3 74.1 L135.9 71.0 L133.4 68.0 L130.9 65.0 L128.3 62.1 L125.8 59.2 L123.2 56.4 L120.7 53.7 L118.1 51.1 L115.5 48.5 M221.2 159.7 L221.9 157.7 L222.5 155.6 L223.0 153.4 L223.3 151.2 L223.5 149.0 L223.6 146.7 L223.5 144.4 L223.3 142.0 L223.0 139.6 L222.5 137.2 L221.9 134.8 L221.2 132.3 L220.4 129.8 L219.4 127.3 L218.3 124.8 L217.0 122.2 L215.7 119.7 L214.2 117.1 L212.6 114.5 L210.9 112.0 L209.1 109.4 L207.1 106.9 L205.1 104.3 L202.9 101.8 L200.7 99.3 L198.3 96.8 L195.8 94.3 L193.2 91.9 L190.6 89.4 L187.8 87.0 L185.0 84.7 L182.0 82.4 L179.0 80.1 L175.9 77.8 L172.8 75.6 L169.5 73.5 L166.2 71.4 L162.9 69.3 L159.5 67.3 L156.0 65.4 L152.5 63.5 L148.9 61.7 L145.3 60.0 L141.6 58.3 L138.0 56.7 L134.3 55.1 L130.5 53.7 L126.8 52.3 L123.0 50.9 L119.3 49.7 L115.5 48.5 M227.7 89.1 L227.0 86.9 L226.3 84.8 L225.4 82.7 L224.4 80.6 L223.2 78.6 L221.9 76.6 L220.5 74.6 L219.0 72.7 L217.3 70.9 L215.5 69.1 L213.6 67.4 L211.5 65.7 L209.4 64.1 L207.1 62.5 L204.7 61.0 L202.3 59.6 L199.7 58.2 L197.0 56.9 L194.2 55.7 L191.3 54.5 L188.3 53.5 L185.2 52.5 L182.1 51.5 L178.8 50.7 L175.5 49.9 L172.1 49.2 L168.7 48.6 L165.1 48.0 L161.6 47.6 L157.9 47.2 L154.2 46.9 L150.5 46.7 L146.7 46.6 L142.9 46.5 L139.0 46.6 L135.2 46.7 L131.3 46.9 L127.3 47.2 L123.4 47.6 L119.5 48.0 L115.5 48.5 M194.7 31.2 L193.3 30.1 L191.8 29.1 L190.2 28.2 L188.5 27.4 L186.8 26.7 L184.9 26.2 L183.0 25.7 L181.0 25.4 L178.9 25.1 L176.7 25.0 L174.4 25.0 L172.1 25.0 L169.7 25.2 L167.3 25.5 L164.8 26.0 L162.2 26.5 L159.5 27.1 L156.9 27.8 L154.1 28.7 L151.3 29.6 L148.5 30.7 L145.6 31.8 L142.7 33.1 L139.8 34.4 L136.8 35.8 L133.8 37.4 L130.8 39.0 L127.8 40.8 L124.7 42.6 L121.6 44.5 L118.6 46.5 L115.5 48.5 M59.8 215.1 L62.7 216.7 L65.7 218.1 L68.7 219.5 L71.8 220.8 L75.0 222.0 L78.2 223.1 L81.4 224.1 L84.7 225.1 L88.0 225.9 L91.4 226.6 L94.8 227.3 L98.2 227.8 L101.6 228.3 L105.1 228.6 L108.6 228.9 L112.0 229.0 L115.5 229.1 L119.0 229.0 L122.4 228.9 L125.9 228.6 L129.4 228.3 L132.8 227.8 L136.2 227.3 L139.6 226.6 L143.0 225.9 L146.3 225.1 L149.6 224.1 L152.8 223.1 L156.0 222.0 L159.2 220.8 L162.3 219.5 L165.3 218.1 L168.3 216.7 L171.2 215.1 M0.5 114.5 L0.6 117.8 L0.8 121.1 L1.1 124.3 L1.6 127.6 L2.2 130.9 L3.0 134.1 L3.9 137.3 L5.0 140.5 L6.1 143.6 L7.4 146.7 L8.9 149.8 L10.4 152.8 L12.1 155.8 L14.0 158.7 L15.9 161.6 L18.0 164.4 L20.2 167.2 L22.5 169.9 L24.9 172.5 L27.4 175.1 L30.0 177.5 L32.8 179.9 L35.6 182.3 L38.5 184.5 L41.6 186.7 L44.7 188.7 L47.9 190.7 L51.2 192.6 L54.6 194.4 L58.0 196.1 L61.5 197.7 L65.1 199.2 L68.7 200.6 L72.4 201.8 L76.2 203.0 L80.0 204.1 L83.8 205.1 L87.7 205.9 L91.6 206.6 L95.5 207.3 L99.5 207.8 L103.5 208.2 L107.5 208.5 L111.5 208.6 L115.5 208.7 L119.5 208.6 L123.5 208.5 L127.5 208.2 L131.5 207.8 L135.5 207.3 L139.4 206.6 L143.3 205.9 L147.2 205.1 L151.0 204.1 L154.8 203.0 L158.6 201.8 L162.3 200.6 L165.9 199.2 L169.5 197.7 L173.0 196.1 L176.4 194.4 L179.8 192.6 L183.1 190.7 L186.3 188.7 L189.4 186.7 L192.5 184.5 L195.4 182.3 L198.2 179.9 L201.0 177.5 L203.6 175.1 L206.1 172.5 L208.5 169.9 L210.8 167.2 L213.0 164.4 L215.1 161.6 L217.0 158.7 L218.9 155.8 L220.6 152.8 L222.1 149.8 L223.6 146.7 L224.9 143.6 L226.0 140.5 L227.1 137.3 L228.0 134.1 L228.8 130.9 L229.4 127.6 L229.9 124.3 L230.2 121.1 L230.4 117.8 L230.5 114.5 M57.0 15.5 L54.2 17.2 L51.5 19.0 L48.9 20.9 L46.3 22.8 L43.9 24.8 L41.5 26.9 L39.2 29.1 L37.0 31.3 L34.9 33.6 L32.9 35.9 L31.0 38.3 L29.2 40.7 L27.6 43.2 L26.0 45.8 L24.5 48.3 L23.2 51.0 L21.9 53.6 L20.8 56.3 L19.8 59.0 L18.9 61.8 L18.1 64.6 L17.4 67.4 L16.9 70.2 L16.5 73.0 L16.1 75.8 L16.0 78.7 L15.9 81.5 L16.0 84.4 L16.1 87.2 L16.5 90.0 L16.9 92.9 L17.4 95.7 L18.1 98.5 L18.9 101.3 L19.8 104.0 L20.8 106.7 L21.9 109.4 L23.2 112.1 L24.5 114.7 L26.0 117.3 L27.6 119.8 L29.2 122.3 L31.0 124.8 L32.9 127.1 L34.9 129.5 L37.0 131.7 L39.2 134.0 L41.5 136.1 L43.9 138.2 L46.3 140.2 L48.9 142.1 L51.5 144.0 L54.2 145.8 L57.0 147.5 L59.8 149.2 L62.7 150.7 L65.7 152.2 L68.7 153.6 L71.8 154.8 L75.0 156.0 L78.2 157.2 L81.4 158.2 L84.7 159.1 L88.0 159.9 L91.4 160.7 L94.8 161.3 L98.2 161.9 L101.6 162.3 L105.1 162.7 L108.6 162.9 L112.0 163.1 L115.5 163.1 L119.0 163.1 L122.4 162.9 L125.9 162.7 L129.4 162.3 L132.8 161.9 L136.2 161.3 L139.6 160.7 L143.0 159.9 L146.3 159.1 L149.6 158.2 L152.8 157.2 L156.0 156.0 L159.2 154.8 L162.3 153.6 L165.3 152.2 L168.3 150.7 L171.2 149.2 L174.0 147.5 L176.8 145.8 L179.5 144.0 L182.1 142.1 L184.7 140.2 L187.1 138.2 L189.5 136.1 L191.8 134.0 L194.0 131.7 L196.1 129.5 L198.1 127.1 L200.0 124.8 L201.8 122.3 L203.4 119.8 L205.0 117.3 L206.5 114.7 L207.8 112.1 L209.1 109.4 L210.2 106.7 L211.2 104.0 L212.1 101.3 L212.9 98.5 L213.6 95.7 L214.1 92.9 L214.5 90.0 L214.9 87.2 L215.0 84.4 L215.1 81.5 L215.0 78.7 L214.9 75.8 L214.5 73.0 L214.1 70.2 L213.6 67.4 L212.9 64.6 L212.1 61.8 L211.2 59.0 L210.2 56.3 L209.1 53.6 L207.8 51.0 L206.5 48.3 L205.0 45.8 L203.4 43.2 L201.8 40.7 L200.0 38.3 L198.1 35.9 L196.1 33.6 L194.0 31.3 L191.8 29.1 L189.5 26.9 L187.1 24.8 L184.7 22.8 L182.1 20.9 L179.5 19.0 L176.8 17.2 L174.0 15.5 M135.2 13.1 L133.3 12.6 L131.3 12.1 L129.4 11.7 L127.5 11.3 L125.5 11.0 L123.5 10.7 L121.5 10.5 L119.5 10.4 L117.5 10.3 L115.5 10.3 L113.5 10.3 L111.5 10.4 L109.5 10.5 L107.5 10.7 L105.5 11.0 L103.5 11.3 L101.6 11.7 L99.7 12.1 L97.7 12.6 L95.8 13.1 L94.0 13.7 L92.1 14.3 L90.3 15.0 L88.5 15.8 L86.8 16.6 L85.0 17.4 L83.3 18.3 L81.7 19.3 L80.1 20.3 L78.5 21.3 L77.0 22.4 L75.6 23.5 L74.1 24.7 L72.8 25.9 L71.5 27.1 L70.2 28.4 L69.0 29.7 L67.8 31.0 L66.7 32.4 L65.7 33.8 L64.7 35.3 L63.8 36.7 L63.0 38.2 L62.2 39.7 L61.5 41.3 L60.8 42.8 L60.2 44.4 L59.7 46.0 L59.3 47.6 L58.9 49.2 L58.6 50.8 L58.3 52.5 L58.1 54.1 L58.0 55.7 L58.0 57.4 L58.0 59.0 L58.1 60.7 L58.3 62.3 L58.6 63.9 L58.9 65.6 L59.3 67.2 L59.7 68.8 L60.2 70.4 L60.8 71.9 L61.5 73.5 L62.2 75.0 L63.0 76.5 L63.8 78.0 L64.7 79.5 L65.7 80.9 L66.7 82.3 L67.8 83.7 L69.0 85.1 L70.2 86.4 L71.5 87.7 L72.8 88.9 L74.1 90.1 L75.6 91.3 L77.0 92.4 L78.5 93.5 L80.1 94.5 L81.7 95.5 L83.3 96.4 L85.0 97.3 L86.8 98.2 L88.5 99.0 L90.3 99.7 L92.1 100.4 L94.0 101.0 L95.8 101.6 L97.7 102.2 L99.7 102.7 L101.6 103.1 L103.5 103.4 L105.5 103.8 L107.5 104.0 L109.5 104.2 L111.5 104.4 L113.5 104.4 L115.5 104.5 L117.5 104.4 L119.5 104.4 L121.5 104.2 L123.5 104.0 L125.5 103.8 L127.5 103.4 L129.4 103.1 L131.3 102.7 L133.3 102.2 L135.2 101.6 L137.0 101.0 L138.9 100.4 L140.7 99.7 L142.5 99.0 L144.2 98.2 L146.0 97.3 L147.7 96.4 L149.3 95.5 L150.9 94.5 L152.5 93.5 L154.0 92.4 L155.4 91.3 L156.9 90.1 L158.2 88.9 L159.5 87.7 L160.8 86.4 L162.0 85.1 L163.2 83.7 L164.3 82.3 L165.3 80.9 L166.3 79.5 L167.2 78.0 L168.0 76.5 L168.8 75.0 L169.5 73.5 L170.2 71.9 L170.8 70.4 L171.3 68.8 L171.7 67.2 L172.1 65.6 L172.4 63.9 L172.7 62.3 L172.9 60.7 L173.0 59.0 L173.0 57.4 L173.0 55.7 L172.9 54.1 L172.7 52.5 L172.4 50.8 L172.1 49.2 L171.7 47.6 L171.3 46.0 L170.8 44.4 L170.2 42.8 L169.5 41.3 L168.8 39.7 L168.0 38.2 L167.2 36.7 L166.3 35.3 L165.3 33.8 L164.3 32.4 L163.2 31.0 L162.0 29.7 L160.8 28.4 L159.5 27.1 L158.2 25.9 L156.9 24.7 L155.4 23.5 L154.0 22.4 L152.5 21.3 L150.9 20.3 L149.3 19.3 L147.7 18.3 L146.0 17.4 L144.2 16.6 L142.5 15.8 L140.7 15.0 L138.9 14.3 L137.0 13.7 L135.2 13.1" fill="none" stroke="#9e9e9e" stroke-width="0.45" opacity="0.7"/>
<path d="M70.3 140.3 L72.6 141.8 L75.0 143.3 L75.3 144.5 L78.1 144.8 L81.0 145.1 L84.8 142.3 L84.7 140.7 L87.8 139.2 L90.8 137.6 L91.1 135.2 L93.6 135.2 L97.5 135.2 L99.7 134.4 L101.4 136.5 L104.0 140.3 L106.7 142.3 L108.9 144.1 L108.5 147.9 L110.0 146.1 L111.1 146.1 L113.2 143.9 L111.0 142.2 L109.5 140.4 L106.7 138.8 L106.1 136.8 L104.5 134.9 L104.8 133.1 L106.7 132.7 L107.7 133.8 L109.0 136.2 L111.7 138.3 L114.0 140.4 L114.7 142.5 L115.5 144.8 L117.1 147.3 L118.7 150.0 L120.3 150.9 L120.6 148.0 L119.8 145.1 L121.3 143.5 L124.6 142.3 L127.6 141.6 L129.0 141.1 L127.4 139.7 L127.0 137.4 L127.9 135.1 L129.2 133.1 L130.2 130.6 L132.0 130.1 L134.3 131.5 L133.0 132.3 L134.6 133.6 L136.0 133.1 L137.8 131.3 L136.2 130.5 L139.1 127.5 L141.2 126.5 L140.2 129.3 L140.1 132.0 L143.3 133.5 L147.1 136.4 L150.0 133.4 L153.8 133.4 L156.4 132.3 L154.3 130.6 L152.7 128.1 L152.7 126.0 L153.4 124.0 L154.5 123.1 L156.5 121.0 L155.1 117.9 L153.6 114.7 L155.3 113.3 L157.0 111.8 L159.1 110.6 L161.0 109.3 L159.3 105.7 L157.5 102.2 L155.6 99.4 L153.6 96.7 L151.7 94.0 L150.0 91.1 L148.2 88.3 L146.4 85.4 L146.2 83.2 L145.9 80.9 L145.4 78.7 L144.5 75.6 L143.9 76.4 L143.3 77.2 L142.7 78.0 L142.0 78.8 L141.4 80.3 L140.4 81.2 L139.3 82.1 L138.3 83.2 L137.2 84.3 L136.1 84.5 L135.0 84.7 L133.9 84.9 L132.8 85.0 L133.7 88.7 L132.3 90.0 L132.2 92.9 L130.3 95.1 L128.3 94.1 L127.0 90.4 L128.4 90.5 L129.9 90.5 L130.8 89.3 L131.6 88.1 L130.9 86.3 L129.2 85.6 L127.4 84.8 L126.0 85.1 L124.6 85.2 L123.5 84.9 L122.4 84.6 L121.0 82.5 L119.9 82.6 L118.8 82.7 L117.5 83.7 L116.2 84.7 L114.8 85.2 L113.4 85.7 L112.2 87.1 L111.0 88.4 L109.4 92.2 L107.3 95.0 L105.5 96.7 L103.6 98.4 L101.1 100.9 L100.7 104.9 L101.8 107.2 L104.7 105.7 L105.9 104.8 L106.2 106.1 L106.7 108.6 L107.4 112.1 L108.9 113.4 L111.6 112.0 L111.8 108.8 L114.3 105.9 L113.0 103.0 L113.0 99.4 L114.7 97.5 L116.4 95.5 L117.2 93.1 L118.6 93.8 L120.2 94.3 L120.1 96.3 L118.5 97.4 L116.9 98.5 L116.8 102.5 L118.0 104.4 L120.5 103.9 L122.2 103.5 L123.9 103.0 L125.7 103.9 L123.6 105.0 L121.6 105.3 L119.6 105.6 L119.2 107.4 L120.2 109.9 L118.2 109.0 L116.6 110.9 L116.9 113.5 L115.3 115.5 L113.8 114.9 L110.8 115.8 L108.7 116.4 L106.1 115.6 L104.0 114.1 L102.5 113.4 L102.4 110.4 L105.4 108.4 L104.7 111.3 L105.2 113.0 L102.5 115.7 L100.1 116.1 L97.4 116.5 L95.8 119.2 L93.8 119.6 L92.3 121.0 L90.2 121.9 L88.4 121.2 L87.6 122.8 L85.6 122.3 L83.7 121.8 L85.9 125.3 L86.6 128.1 L84.9 132.7 L81.5 131.7 L79.0 130.4 L76.5 129.1 L74.5 129.7 L74.3 131.7 L73.1 135.3 L71.3 137.2 L71.8 138.9Z M82.4 82.6 L84.7 82.1 L85.8 83.1 L86.9 84.1 L88.0 84.6 L89.0 85.1 L88.9 87.6 L86.9 88.5 L85.4 88.7 L83.8 88.8 L82.9 87.8 L82.0 86.9 L81.2 86.0 L81.5 83.7Z M83.5 118.3 L85.8 118.6 L88.0 118.8 L90.3 119.0 L92.5 119.0 L93.6 116.2 L92.4 114.4 L92.4 112.1 L91.5 109.5 L92.4 105.8 L92.1 103.4 L90.2 102.7 L88.2 104.3 L87.7 107.3 L87.6 109.9 L89.1 112.1 L88.6 113.4 L86.6 113.7 L85.2 115.4 L87.5 117.0Z M84.6 114.3 L85.2 112.1 L86.8 110.2 L85.8 108.1 L83.9 108.3 L81.7 109.1 L80.3 112.4 L80.2 113.9 L82.0 114.3Z M111.9 68.4 L112.7 67.6 L113.4 66.7 L114.1 65.9 L114.6 65.7 L115.2 65.4 L115.7 65.2 L116.2 65.0 L116.7 65.3 L117.3 65.5 L117.9 65.8 L117.4 66.7 L116.9 67.7 L116.3 68.6 L115.5 70.5 L114.6 72.3 L113.7 71.8 L112.8 71.3 L112.3 69.9Z M135.3 78.1 L135.1 75.5 L134.7 72.9 L134.2 70.5 L133.6 68.3 L134.0 67.5 L134.3 66.8 L134.6 66.1 L134.8 65.4 L135.0 64.7 L135.5 66.0 L135.9 67.3 L136.2 68.8 L136.5 70.3 L136.7 71.8 L136.8 73.4 L136.9 75.0 L137.5 78.1 L136.4 78.1Z M123.9 64.4 L124.2 63.7 L124.5 63.1 L124.7 62.5 L124.9 61.9 L125.1 61.3 L125.2 60.7 L126.0 60.8 L126.7 60.9 L127.4 61.0 L128.2 61.0 L127.9 61.4 L127.7 61.8 L127.4 62.2 L127.1 62.5 L126.7 62.9 L126.4 63.3 L126.1 63.7 L125.7 64.0 L125.1 64.2 L124.5 64.3Z M103.5 147.7 L106.0 147.5 L108.6 147.3 L107.6 150.3Z M97.4 144.7 L99.7 145.0 L100.1 141.2 L97.7 141.0Z M98.4 140.1 L99.8 140.4 L100.0 137.2 L98.7 138.2Z M121.2 153.1 L125.8 153.0 L122.0 152.5Z M105.2 113.4 L107.1 112.9 L106.8 111.8 L105.4 112.2Z" fill="#2f6b2f"/>
<path d="M166.8 121.9 L166.0 118.3 L166.8 115.8 L169.0 116.8 L169.4 121.0Z M179.8 105.1 L180.7 103.3 L181.5 101.5 L183.7 100.1 L183.9 101.5 L182.5 103.1 L181.1 104.7Z M186.5 69.1 L185.7 65.8 L183.2 63.1 L180.6 60.6 L181.8 60.8 L184.4 64.0 L186.9 67.5Z M125.4 103.0 L125.8 100.7 L127.6 101.0 L127.5 102.8Z M129.5 100.6 L129.3 97.4 L130.4 97.7 L130.4 100.6Z" fill="#eeeeee"/>
</g>
<circle cx="115.5" cy="114.5" r="114.7" fill="none" stroke="#a8a8a8" stroke-width="0.7"/>
</svg></div>
<div class="t" style="left:759px;top:536.5px;width:241px;text-align:center;font-size:9.6px;color:#202122">Еуропа</div>
<div id="ib" class="abs" style="left:760px;top:1px;font-size:11.5px">
  <div class="ibl" style="top:555px;color:#c03a33">Территория</div><div class="ibv" style="top:555px">10,18 млн км²</div>
  <div class="ibl" style="top:575px;color:#202122">Халық саны</div><div class="ibv" style="top:575px">746,419 млн (<a class="g">2018</a>) адам</div>
  <div class="ibl lk" style="top:596px">Тығыздығы</div><div class="ibv" style="top:596px">72,5 адам/км²</div>
  <div class="ibl lk" style="top:616px">Этнохороним</div><div class="ibv lk" style="top:616px">еуропалықтар</div>
  <div class="ibl" style="top:637px;color:#202122">Енеді</div><div class="ibv" style="top:637px">50 мемлекет</div>
  <div class="ibl lk" style="top:657px">Тілдері</div><div class="ibv" style="top:657px">Еуропа тілдері</div>
  <div class="ibl lk" style="top:677px">Уақыт</div><div class="ibv g" style="top:677px">UTC UTC+6</div>
  <div class="ibl lk" style="top:694px">белдеулері</div>
  <div class="ibl lk" style="top:714px">Интернет үйшігі</div><div class="ibv" style="top:714px"><span style="color:#cc3f33">.eu</span> (<a>Еуроодақ</a>)</div>
  <div class="ibv" style="top:732px"><span style="color:#cc3f33">.su</span> (<a>Посткеңестік</a></div>
  <div class="ibv" style="top:749px"><a>мемлекеттер</a>)</div>
</div>
<!-- dropdown -->
<div class="abs" style="left:0;top:65px;width:308px;height:143px;background:#f2f2f2;border-top:1px solid #d9d9d9;border-right:1px solid #e2e2e2;border-bottom:1px solid #d9d9d9"></div>
<div class="abs wlogo" style="left:11px;top:73px;width:14px;height:14px"><svg width="11" height="8.5" viewBox="0 0 13 10" style="position:absolute;left:1.5px;top:2.75px"><path d="M0.2 1 H3.6 M4.6 1 H7.6 M8.8 1 H12.8 M1.4 1 L4.4 9.3 L6.5 3.6 M5.4 1 L8.6 9.3 L11.6 1" fill="none" stroke="#1a1a1a" stroke-width="1.25"/></svg></div>
<div class="t dd" style="top:73px">Ұлыбритания — Уикипедия</div>
<div class="abs wlogo" style="left:11px;top:95px;width:14px;height:14px"><svg width="11" height="8.5" viewBox="0 0 13 10" style="position:absolute;left:1.5px;top:2.75px"><path d="M0.2 1 H3.6 M4.6 1 H7.6 M8.8 1 H12.8 M1.4 1 L4.4 9.3 L6.5 3.6 M5.4 1 L8.6 9.3 L11.6 1" fill="none" stroke="#1a1a1a" stroke-width="1.25"/></svg></div>
<div class="t dd" style="top:95px">Ұлыбритания — Уикипедия</div>
<div class="abs wlogo" style="left:11px;top:117px;width:14px;height:14px"><svg width="11" height="8.5" viewBox="0 0 13 10" style="position:absolute;left:1.5px;top:2.75px"><path d="M0.2 1 H3.6 M4.6 1 H7.6 M8.8 1 H12.8 M1.4 1 L4.4 9.3 L6.5 3.6 M5.4 1 L8.6 9.3 L11.6 1" fill="none" stroke="#1a1a1a" stroke-width="1.25"/></svg></div>
<div class="t dd" style="top:117px">Лондон — Уикипедия</div>
<svg class="abs" style="left:12px;top:139px" width="12" height="13" viewBox="0 0 12 13"><path d="M1.5 0.8 H7.5 L10.5 3.8 V12.2 H1.5Z M7.5 0.8 V3.8 H10.5" fill="#fff" stroke="#555" stroke-width="1"/></svg>
<div class="t dd" style="top:139px">London - Wikipedia</div>
<svg class="abs" style="left:11px;top:160px" width="14" height="14" viewBox="0 0 14 14"><circle cx="7" cy="7" r="7" fill="#f4523b"/><path d="M8.2 3.2 H7 Q4.8 3.2 4.8 5.4 Q4.8 7.2 6.5 7.6 L4.6 11 M8.2 3.2 V11 M8.2 7.6 H6.8" fill="none" stroke="#fff" stroke-width="1.3"/></svg>
<div class="t dd" style="top:160px">london — Яндекс: нашлось 587 тыс. результатов</div>
<div class="abs" style="left:0;top:180px;width:307px;height:1px;background:#d9d9d9"></div>
<svg class="abs" style="left:12px;top:187px" width="13" height="13" viewBox="0 0 13 13"><path d="M2.2 3.2 A5.3 5.3 0 1 1 1.2 6.5" fill="none" stroke="#222" stroke-width="1.5"/><path d="M0.8 1 V4.3 H4" fill="none" stroke="#222" stroke-width="1.5"/><path d="M6.5 3.5 V6.8 L8.6 8.3" fill="none" stroke="#222" stroke-width="1.4"/></svg>
<div class="t dd" style="top:187px">Тарихты толық көрсету</div>
</body></html>
